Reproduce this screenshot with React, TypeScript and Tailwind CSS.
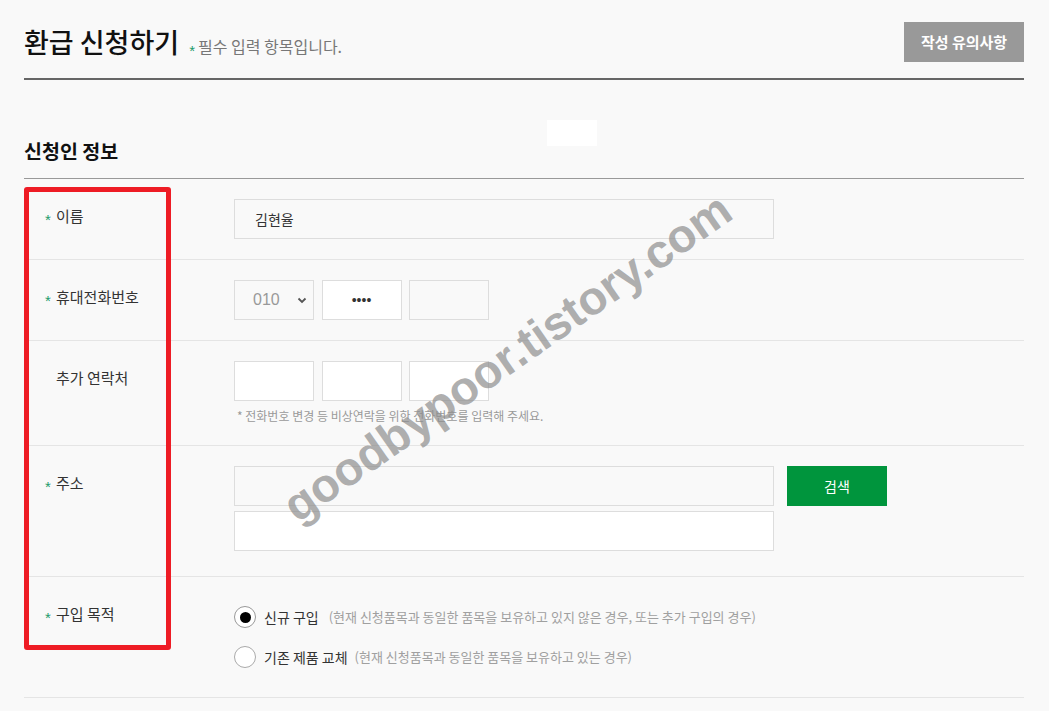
import React from "react";

const Star = () => (
  <span className="relative top-[3px] inline-block w-[11px] text-[#1e9b6a] text-[15px] leading-none font-['Liberation_Sans',sans-serif]">*</span>
);

const Label = ({ req, children }: { req?: boolean; children: React.ReactNode }) => (
  <div className="pl-[21px] pt-[26px] text-[15px] leading-[22px] text-[#333] self-start">
    {req ? <Star /> : <span className="inline-block w-[11px]" />}
    <span>{children}</span>
  </div>
);

const Box = ({ w, white, children, center }: { w: string; white?: boolean; children?: React.ReactNode; center?: boolean }) => (
  <div
    className={`${w} h-[40px] border border-[#dddddd] ${white ? "bg-white" : "bg-[#f9f9f9]"} flex items-center ${center ? "justify-center" : ""}`}
  >
    {children}
  </div>
);

export default function App() {
  return (
    <div className="relative min-h-[711px] bg-[#f9f9f9] font-['Noto_Sans_CJK_KR','Noto_Sans',sans-serif] overflow-hidden">
      <div className="w-[1000px] ml-[24px]">
        {/* header */}
        <div className="h-[80px] border-b-2 border-[#666666] flex justify-between items-start pt-[22px]">
          <div className="flex items-baseline h-[40px] leading-[40px]">
            <span className="text-[27px] font-medium text-[#111]">환급 신청하기</span>
            <span className="ml-[10px] text-[16px] text-[#777]">
              <span className="relative top-[3px] text-[#1e9b6a] text-[15px] mr-[3px] font-['Liberation_Sans',sans-serif]">*</span>필수 입력 항목입니다.
            </span>
          </div>
          <div className="w-[120px] h-[40px] bg-[#999999] text-white text-[15px] font-bold flex items-center justify-center">
            작성 유의사항
          </div>
        </div>

        {/* section title */}
        <div className="pt-[59px] pb-[15px] border-b border-[#999999] text-[19.5px] leading-[24px] font-bold text-[#111]">
          신청인 정보
        </div>

        {/* row 1 */}
        <div className="grid grid-cols-[210px_1fr] border-b border-[#e5e5e5]">
          <Label req>이름</Label>
          <div className="pt-[20px] pb-[20px]">
            <Box w="w-[540px]">
              <span className="pl-[20px] text-[14px] text-[#333]">김현율</span>
            </Box>
          </div>
        </div>

        {/* row 2 */}
        <div className="grid grid-cols-[210px_1fr] border-b border-[#e5e5e5]">
          <Label req>휴대전화번호</Label>
          <div className="pt-[20px] pb-[20px] flex gap-[7.5px]">
            <Box w="w-[80px]">
              <span className="pl-[18px] text-[16px] text-[#999] font-['Liberation_Sans',sans-serif]">010</span>
              <svg className="ml-auto mr-[6px]" width="10" height="7" viewBox="0 0 10 7">
                <path d="M1.5 1.5 L5 5 L8.5 1.5" fill="none" stroke="#555" strokeWidth="1.8" />
              </svg>
            </Box>
            <Box w="w-[80px]" white center>
              <span className="text-[14px] text-[#333] font-['Liberation_Sans',sans-serif] leading-none">••••</span>
            </Box>
            <Box w="w-[80px]" />
          </div>
        </div>

        {/* row 3 */}
        <div className="grid grid-cols-[210px_1fr] border-b border-[#e5e5e5]">
          <Label>추가 연락처</Label>
          <div className="pt-[20px] pb-[20px]">
            <div className="flex gap-[7.5px]">
              <Box w="w-[80px]" white />
              <Box w="w-[80px]" white />
              <Box w="w-[80px]" white />
            </div>
            <div className="mt-[6px] pl-[3px] text-[12px] leading-[18px] text-[#999]">
              * 전화번호 변경 등 비상연락을 위한 전화번호를 입력해 주세요.
            </div>
          </div>
        </div>

        {/* row 4 */}
        <div className="grid grid-cols-[210px_1fr] border-b border-[#e5e5e5]">
          <Label req>주소</Label>
          <div className="pt-[20px] pb-[25px]">
            <div className="flex gap-[13px]">
              <Box w="w-[540px]" />
              <div className="w-[100px] h-[40px] bg-[#00953d] text-white text-[14px] flex items-center justify-center">
                검색
              </div>
            </div>
            <div className="mt-[5px]">
              <Box w="w-[540px]" white />
            </div>
          </div>
        </div>

        {/* row 5 */}
        <div className="grid grid-cols-[210px_1fr] border-b border-[#e5e5e5]">
          <Label req>구입 목적</Label>
          <div className="pt-[20px] pb-[20px]">
            <div className="h-[40px] flex items-center">
              <div className="w-[22px] h-[22px] rounded-full border border-[#999] bg-white flex items-center justify-center">
                <div className="w-[11px] h-[11px] rounded-full bg-black" />
              </div>
              <span className="ml-[8px] text-[14px] text-[#333]">신규 구입</span>
              <span className="ml-[10px] text-[13px] text-[#a0a0a0]">
                (현재 신청품목과 동일한 품목을 보유하고 있지 않은 경우, 또는 추가 구입의 경우)
              </span>
            </div>
            <div className="h-[40px] flex items-center">
              <div className="w-[22px] h-[22px] rounded-full border border-[#aaa] bg-white" />
              <span className="ml-[8px] text-[14px] text-[#333]">기존 제품 교체</span>
              <span className="ml-[7px] text-[13px] text-[#a0a0a0]">
                (현재 신청품목과 동일한 품목을 보유하고 있는 경우)
              </span>
            </div>
          </div>
        </div>
      </div>

      {/* white blank box */}
      <div className="absolute left-[547px] top-[120px] w-[50px] h-[26px] bg-white" />

      {/* red highlight box */}
      <div className="absolute left-[24px] top-[187px] w-[147px] h-[463px] border-[5px] border-[#ee1c25] rounded-[3px]" />

      {/* watermark */}
      <div className="absolute left-[507px] top-[357px] -translate-x-1/2 -translate-y-1/2 -rotate-[35deg] whitespace-nowrap font-['Liberation_Sans',sans-serif] font-bold text-[47px] leading-none text-[rgba(140,140,140,0.7)]">
        goodbypoor.tistory.com
      </div>
    </div>
  );
}
